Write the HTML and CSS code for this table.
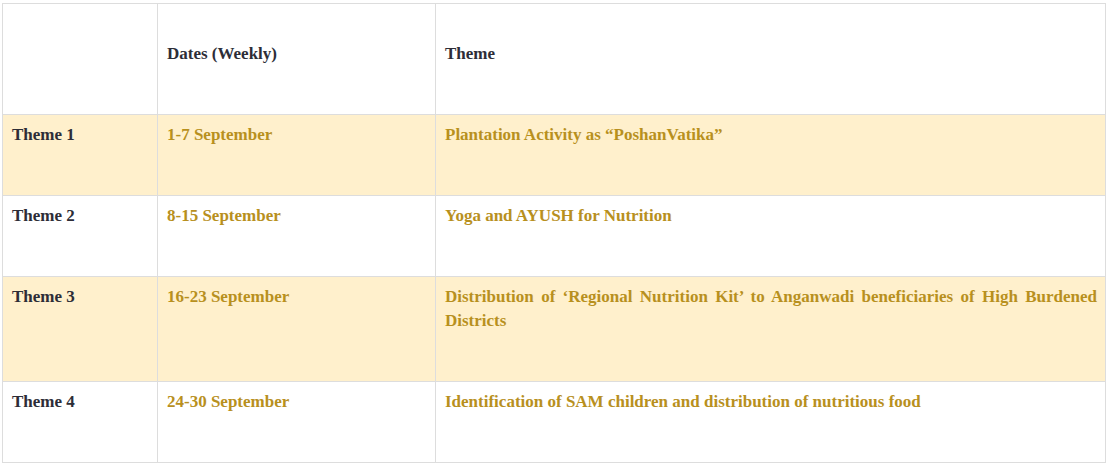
FILE: index.html
```html
<!DOCTYPE html>
<html>
<head>
<meta charset="utf-8">
<link rel="stylesheet" href="styles.css">
</head>
<body>
<table class="schedule">
  <colgroup>
    <col class="c1"><col class="c2"><col class="c3">
  </colgroup>
  <thead>
    <tr><th></th><th>Dates (Weekly)</th><th>Theme</th></tr>
  </thead>
  <tbody>
    <tr class="hl"><td class="name">Theme 1</td><td class="gold">1-7 September</td><td class="gold">Plantation Activity as “PoshanVatika”</td></tr>
    <tr><td class="name">Theme 2</td><td class="gold">8-15 September</td><td class="gold">Yoga and AYUSH for Nutrition</td></tr>
    <tr class="hl"><td class="name">Theme 3</td><td class="gold">16-23 September</td><td class="gold">Distribution of ‘Regional Nutrition Kit’ to Anganwadi beneficiaries of High Burdened Districts</td></tr>
    <tr><td class="name">Theme 4</td><td class="gold">24-30 September</td><td class="gold">Identification of SAM children and distribution of nutritious food</td></tr>
  </tbody>
</table>
</body>
</html>
```

FILE: styles.css
```css
html, body { background: #fff; }
body { margin: 3px 4px 0 2px; font-family: "Liberation Serif", "Times New Roman", serif; }
.schedule {
  width: 1104px;
  border-collapse: collapse;
  table-layout: fixed;
  font-size: 17px;
  font-weight: bold;
  line-height: 24px;
}
.c1 { width: 155px; }
.c2 { width: 278px; }
.schedule th, .schedule td {
  border: 1px solid #dddddd;
  text-align: justify;
  padding: 8px 8px 48px 9px;
  vertical-align: top;
  color: #2d2d37;
}
.schedule th {
  padding-top: 38px;
  vertical-align: bottom;
}
.schedule .gold { color: #b8901e; }
.hl td { background: #fff0cc; }
```
